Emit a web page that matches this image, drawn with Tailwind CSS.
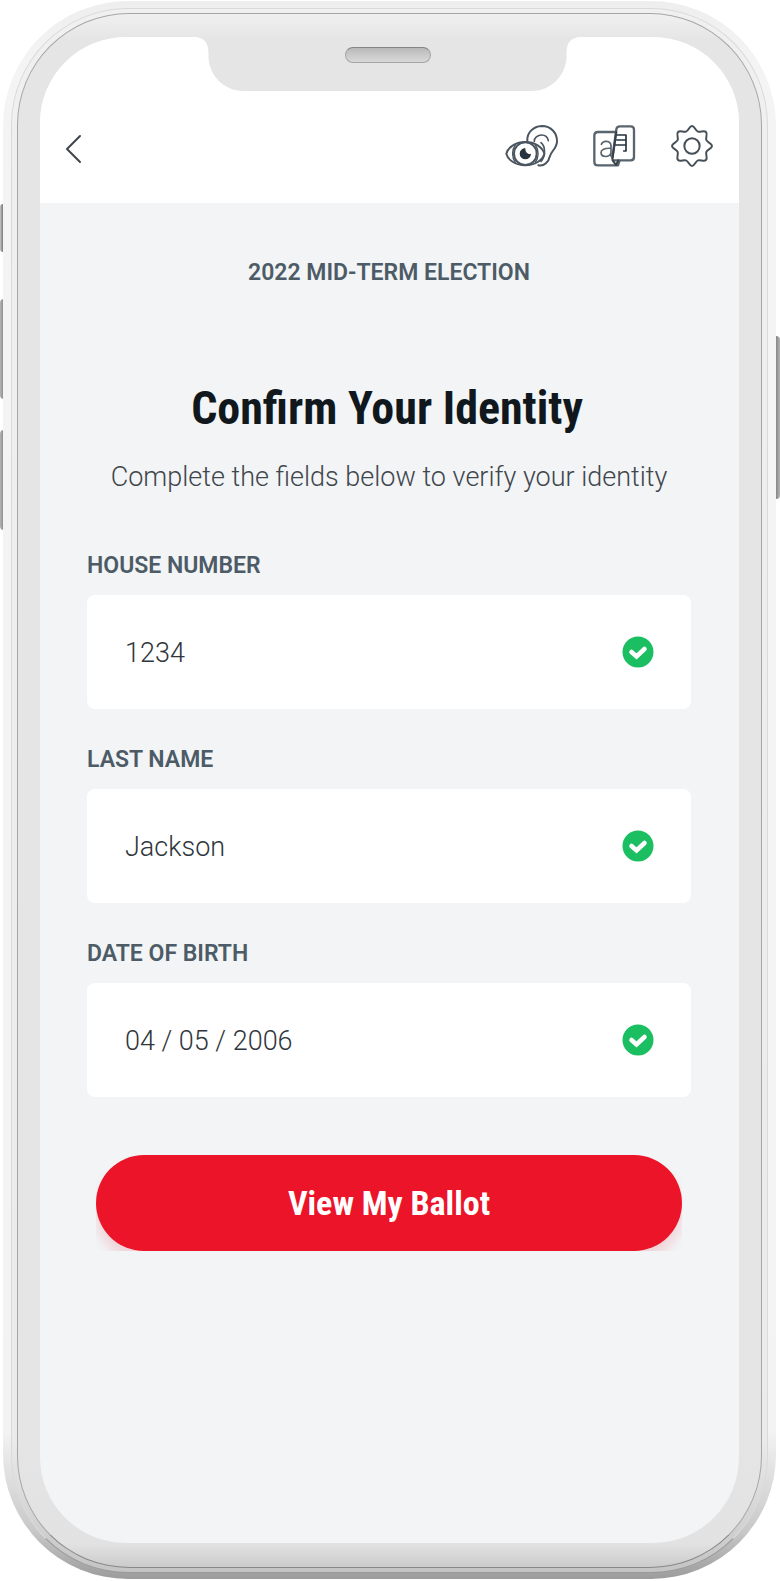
<!DOCTYPE html>
<html lang="en">
<head>
<meta charset="utf-8">
<meta name="viewport" content="width=device-width, initial-scale=1">
<title>Confirm Your Identity</title>
<script src="https://cdn.jsdelivr.net/npm/@tailwindcss/browser@4"></script>
</head>
<body class="bg-white font-[Roboto,sans-serif]">
<div class="relative flex min-h-screen flex-col pt-px pr-1 pb-0.5 pl-[3px]">
  <!-- side buttons of the handset -->
  <div class="absolute left-0 top-[204px] h-12 w-[3px] rounded-l-sm bg-gradient-to-r from-[#c8c8c8] to-[#777]"></div>
  <div class="absolute left-0 top-[299px] h-[100px] w-1 rounded-l-sm bg-gradient-to-r from-[#b5b5b5] to-[#858585]"></div>
  <div class="absolute left-0 top-[430px] h-[100px] w-1 rounded-l-sm bg-gradient-to-r from-[#b5b5b5] to-[#858585]"></div>
  <div class="absolute right-0 top-[336px] h-[163px] w-1 rounded-r-sm bg-gradient-to-r from-[#858585] to-[#b5b5b5]"></div>

  <div class="relative flex grow flex-col rounded-[125px] bg-[linear-gradient(to_bottom,#eeeeee_0,#f4f4f4_60px,#f3f3f3_1430px,#c8c8c8_1530px,#9c9c9c_100%)] px-2 pt-[7px] pb-1.5">
    <div class="flex grow flex-col rounded-[117px] border border-[#dadada] border-b-[#999] bg-[linear-gradient(to_bottom,#f0f0f0_0,#ebebeb_1430px,#c4c4c4_100%)] px-[5px] py-1">
      <div class="flex grow flex-col rounded-[112px] border border-[#a6a6a6] border-b-[#888] bg-[linear-gradient(to_bottom,#f0f0f0_0,#e5e5e5_26px,#e5e5e5_1420px,#e2e2e2_1530px,#cbcbcb_100%)] px-[22px] pt-[23px] pb-6">
        <div class="relative flex grow flex-col overflow-hidden rounded-[86px] bg-[#f2f4f6]">
          <!-- notch with speaker -->
          <div class="absolute top-0 left-0 flex h-[54px] w-full justify-center pt-[10px] pr-1">
            <svg class="absolute inset-x-0 top-0 h-[54px] w-full pr-1" viewBox="0 0 384 54" fill="#e5e5e5" aria-hidden="true"><path d="M0 0C9 1 13 6 13 16V21C14 38 28 54 48 54H336C356 54 370 38 371 21V16C371 6 375 1 384 0Z"/></svg>
            <div class="relative h-4 w-[86px] rounded-full border border-[#a5a5a5] border-t-[#858585] bg-gradient-to-b from-[#b8b8b8] via-[#cacaca] to-[#d8d8d8]"></div>
          </div>

          <header class="flex h-[166px] items-start justify-between bg-white pt-[87px] pr-[25px] pl-[23px]">
            <button type="button" aria-label="Back" class="mt-2.5">
              <svg width="20" height="30" viewBox="0 0 20 30" fill="none" stroke="#40464e" stroke-width="2" stroke-linecap="round" stroke-linejoin="round"><path d="M17 2 4 15 17 28"/></svg>
            </button>
            <div class="flex items-start">
              <button type="button" aria-label="Accessibility" class="mr-[33px]">
                <svg width="54" height="44" viewBox="45 40 162 132" fill="none" stroke="#4a5560" stroke-width="6" stroke-linecap="round" stroke-linejoin="round">
                  <path d="M112 91C110 65 131 47 155 46C184 46 202 68 201 93C200 113 184 121 180 136C176 153 163 168 145 164"/>
                  <path d="M133 92C132 81 143 73 155 73C165 73 173 80 175 90M153 96C167 107 167 136 153 152" stroke-width="5"/>
                  <path fill="#fff" d="M49 129C54 109 78 94 106 94C134 94 158 109 163 129C158 149 134 164 106 164C78 164 54 149 49 129Z"/>
                  <circle cx="106" cy="129" r="34"/>
                  <path d="M76 103C65 118 65 140 76 155M136 103C147 118 147 140 136 155" stroke-width="4"/>
                  <path fill="#283541" stroke="none" d="M106 112A17 17 0 1 0 123 129C116 133 105 126 106 112Z"/>
                </svg>
              </button>
              <button type="button" aria-label="Language" class="mr-[32px]">
                <svg width="46" height="44" viewBox="308 40 138 132" fill="none" stroke="#5a646d" stroke-width="7" stroke-linecap="round" stroke-linejoin="round">
                  <path d="M380 64H326Q315 64 315 75V153Q315 164 326 164H386L391 149"/>
                  <path d="M336 101C341 88 364 89 365 105V137M365 113C345 112 335 117 335 126C336 142 360 140 365 127" stroke-width="5"/>
                  <path fill="#fff" d="M392 47H424Q434 47 434 57V139Q434 149 424 149H375Q368 149 369 141L381 56Q382 47 392 47Z"/>
                  <path d="M370 149 380 163 387 149M370 141 381 64" stroke="#35404a" stroke-width="6"/>
                  <path d="M384 73H410V121H403M382 88H410M379 103H410" stroke="#26313b" stroke-width="5"/>
                </svg>
              </button>
              <button type="button" aria-label="Settings">
                <svg width="44" height="44" viewBox="-66 -66 132 132" fill="none" stroke="#464e56" stroke-width="6" stroke-linecap="round" stroke-linejoin="round">
                  <path d="M0-60C8-60 10-46 18-43C25-40 36-48 42-42C48-36 40-25 43-18C46-10 60-8 60 0C60 8 46 10 43 18C40 25 48 36 42 42C36 48 25 40 18 43C10 46 8 60 0 60C-8 60-10 46-18 43C-25 40-36 48-42 42C-48 36-40 25-43 18C-46 10-60 8-60 0C-60-8-46-10-43-18C-40-25-48-36-42-42C-36-48-25-40-18-43C-10-46-8-60 0-60Z"/>
                  <circle r="23"/>
                </svg>
              </button>
            </div>
          </header>

          <main class="flex flex-col pt-[54px] pr-12 pl-[47px]">
            <p class="text-center text-[23px] leading-8 font-semibold text-[#4d5b66]">2022 MID-TERM ELECTION</p>
            <h1 class="mt-[89px] pr-1 text-center font-['Roboto_Condensed',Roboto,sans-serif] text-[46px] leading-[60px] font-bold text-[#10181d]">Confirm Your Identity</h1>
            <p class="mt-[21px] -mx-5 text-center text-[27px] leading-9 font-light text-[#3f464c]">Complete the fields below to verify your identity</p>

            <form class="mt-[55px] flex flex-col">
              <div class="flex flex-col gap-[13px]">
                <label for="house" class="text-[23px] leading-8 font-semibold text-[#4d5b66]">HOUSE NUMBER</label>
                <div class="flex h-[114px] items-center rounded-lg bg-white pr-[37px] pl-[38px]">
                  <input id="house" type="text" value="1234" class="min-w-0 grow bg-transparent pt-0.5 text-[27px] leading-9 font-light text-[#30363c] outline-none">
                  <svg width="32" height="32" viewBox="0 0 32 32" aria-hidden="true"><circle cx="16" cy="16" r="15.5" fill="#1bbf62"/><path d="M9.500 16 14.500 20.500 22.500 13" fill="none" stroke="#fff" stroke-width="4.5" stroke-linecap="round"/></svg>
                </div>
              </div>
              <div class="mt-[35px] flex flex-col gap-[13px]">
                <label for="last" class="text-[23px] leading-8 font-semibold text-[#4d5b66]">LAST NAME</label>
                <div class="flex h-[114px] items-center rounded-lg bg-white pr-[37px] pl-[38px]">
                  <input id="last" type="text" value="Jackson" class="min-w-0 grow bg-transparent pt-0.5 text-[27px] leading-9 font-light text-[#30363c] outline-none">
                  <svg width="32" height="32" viewBox="0 0 32 32" aria-hidden="true"><circle cx="16" cy="16" r="15.5" fill="#1bbf62"/><path d="M9.500 16 14.500 20.500 22.500 13" fill="none" stroke="#fff" stroke-width="4.5" stroke-linecap="round"/></svg>
                </div>
              </div>
              <div class="mt-[35px] flex flex-col gap-[13px]">
                <label for="dob" class="text-[23px] leading-8 font-semibold text-[#4d5b66]">DATE OF BIRTH</label>
                <div class="flex h-[114px] items-center rounded-lg bg-white pr-[37px] pl-[38px]">
                  <input id="dob" type="text" value="04 / 05 / 2006" class="min-w-0 grow bg-transparent pt-0.5 text-[27px] leading-9 font-light text-[#30363c] outline-none">
                  <svg width="32" height="32" viewBox="0 0 32 32" aria-hidden="true"><circle cx="16" cy="16" r="15.5" fill="#1bbf62"/><path d="M9.500 16 14.500 20.500 22.500 13" fill="none" stroke="#fff" stroke-width="4.5" stroke-linecap="round"/></svg>
                </div>
              </div>
              <div class="mx-[9px] mt-[58px] flex overflow-hidden">
                <button type="button" class="h-24 grow rounded-full bg-[#ec1428] font-['Roboto_Condensed',Roboto,sans-serif] text-[34px] font-bold text-white shadow-[0_10px_12px_rgba(236,20,40,0.15)]">View My Ballot</button>
              </div>
            </form>
          </main>
        </div>
      </div>
    </div>
  </div>
</div>
</body>
</html>
